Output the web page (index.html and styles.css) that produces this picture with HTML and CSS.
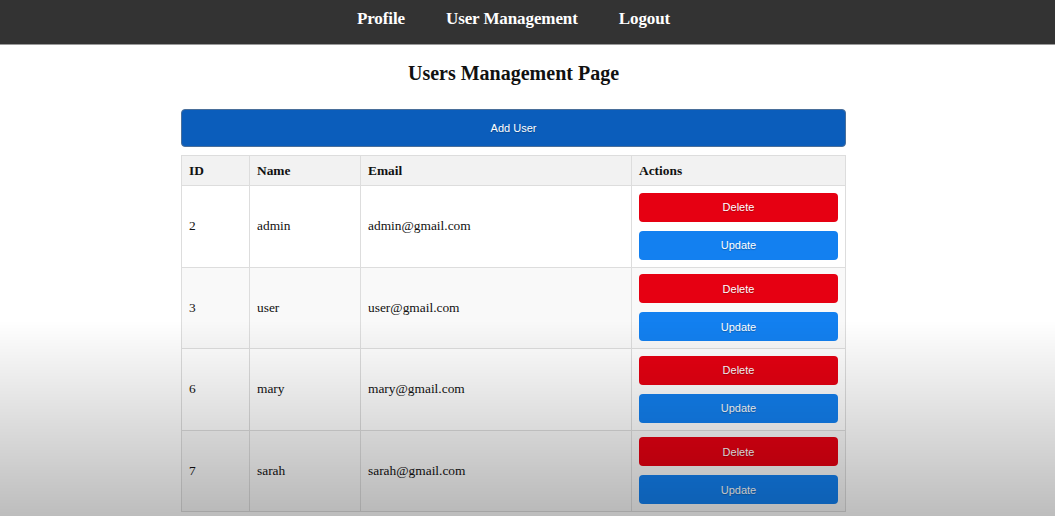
FILE: index.html
```html
<!DOCTYPE html>
<html lang="en">
<head>
<meta charset="utf-8">
<title>Users Management Page</title>
<link rel="stylesheet" href="styles.css">
</head>
<body>
<nav class="topnav">
  <div class="nav-inner">
    <a class="nav-link" href="#">Profile</a>
    <a class="nav-link" href="#">User Management</a>
    <a class="nav-link" href="#">Logout</a>
  </div>
</nav>
<main class="page">
  <h1 class="title">Users Management Page</h1>
  <div class="panel">
    <button class="btn btn-add">Add User</button>
    <table class="users">
      <thead>
        <tr><th class="c-id">ID</th><th class="c-name">Name</th><th class="c-email">Email</th><th class="c-act">Actions</th></tr>
      </thead>
      <tbody>
        <tr><td>2</td><td>admin</td><td>admin@gmail.com</td><td><div class="actions"><button class="btn btn-del">Delete</button><button class="btn btn-upd">Update</button></div></td></tr>
        <tr><td>3</td><td>user</td><td>user@gmail.com</td><td><div class="actions"><button class="btn btn-del">Delete</button><button class="btn btn-upd">Update</button></div></td></tr>
        <tr><td>6</td><td>mary</td><td>mary@gmail.com</td><td><div class="actions"><button class="btn btn-del">Delete</button><button class="btn btn-upd">Update</button></div></td></tr>
        <tr><td>7</td><td>sarah</td><td>sarah@gmail.com</td><td><div class="actions"><button class="btn btn-del">Delete</button><button class="btn btn-upd">Update</button></div></td></tr>
      </tbody>
    </table>
  </div>
</main>
<div class="shade"></div>
</body>
</html>
```
FILE: styles.css
```css
html, body {
  margin: 0;
  padding: 0;
  background: #ffffff;
  font-family: "Liberation Serif", "Times New Roman", serif;
  color: #111;
}
.topnav {
  background: #333333;
  height: 45px;
  border-bottom: 1px solid #9a9a9a;
  box-sizing: border-box;
}
.nav-inner {
  width: 1027px;
  height: 100%;
  display: flex;
  justify-content: center;
  align-items: center;
  gap: 41px;
}
.nav-link {
  color: #ffffff;
  text-decoration: none;
  font-weight: bold;
  font-size: 17px;
  letter-spacing: -0.1px;
  padding-bottom: 7px;
}
.page {
  width: 1027px;
  display: flex;
  flex-direction: column;
  align-items: center;
}
.title {
  margin: 16px 0 0;
  font-size: 20px;
  font-weight: bold;
  line-height: 24px;
}
.panel {
  width: 665px;
  margin-top: 24px;
  display: flex;
  flex-direction: column;
  gap: 8px;
}
.btn {
  border: none;
  color: #fff;
  font-family: "Liberation Sans", Arial, sans-serif;
  font-size: 11px;
  border-radius: 4px;
  cursor: pointer;
  display: block;
  width: 100%;
  text-shadow: 0 1px 1px rgba(0,0,0,0.25);
}
.btn-add {
  height: 38px;
  background: #0b5dbb;
  border: 1px solid #4a6f9a;
}
.users {
  width: 100%;
  border-collapse: collapse;
  border: 1px solid #dddddd;
  font-size: 13.4px;
}
.users th, .users td {
  border: 1px solid #dddddd;
  text-align: left;
  padding: 0 7px;
}
.users th {
  background: #f2f2f2;
  height: 29px;
  font-size: 13.4px;
}
.users td {
  height: 80.5px;
}
.users tbody tr:nth-child(even) td {
  background: #f9f9f9;
}
.c-id { width: 53px; }
.c-name { width: 96px; }
.c-email { width: 256px; }
.actions {
  display: flex;
  flex-direction: column;
  gap: 9px;
}
.btn-del {
  height: 29px;
  background: #e60012;
}
.btn-upd {
  height: 29px;
  background: #1380f0;
}
.shade {
  position: fixed;
  left: 0;
  right: 0;
  top: 320px;
  bottom: 0;
  pointer-events: none;
  background: linear-gradient(to bottom, rgba(0,0,0,0) 0%, rgba(0,0,0,0.1) 40%, rgba(0,0,0,0.26) 100%);
}
```
